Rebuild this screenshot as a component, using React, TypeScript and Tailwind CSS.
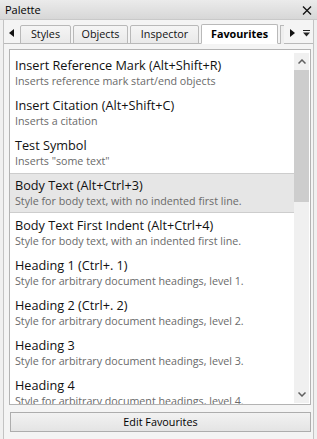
import React from "react";

const items = [
  { t: "Insert Reference Mark (Alt+Shift+R)", d: "Inserts reference mark start/end objects" },
  { t: "Insert Citation (Alt+Shift+C)", d: "Inserts a citation" },
  { t: "Test Symbol", d: 'Inserts "some text"' },
  { t: "Body Text (Alt+Ctrl+3)", d: "Style for body text, with no indented first line.", sel: true },
  { t: "Body Text First Indent (Alt+Ctrl+4)", d: "Style for body text, with an indented first line." },
  { t: "Heading 1 (Ctrl+. 1)", d: "Style for arbitrary document headings, level 1." },
  { t: "Heading 2 (Ctrl+. 2)", d: "Style for arbitrary document headings, level 2." },
  { t: "Heading 3", d: "Style for arbitrary document headings, level 3." },
  { t: "Heading 4", d: "Style for arbitrary document headings, level 4." },
];

const tabs = [
  { n: "Styles", w: "w-[51px]" },
  { n: "Objects", w: "w-[55px]" },
  { n: "Inspector", w: "w-[69px]" },
];

export default function App() {
  return (
    <div className="w-[317px] h-[439px] bg-[#f0f0f0] flex flex-col overflow-hidden font-['Open_Sans',sans-serif] text-black">
      {/* title bar */}
      <div className="h-[20px] flex items-center justify-between bg-[linear-gradient(#ebebeb,#d7d7d7)] border-b border-[#c9c9c9]">
        <span className="ml-[5px] text-[11px] leading-none">Palette</span>
        <svg width="10" height="9" viewBox="0 0 10 9" className="mr-[5px] mt-[2px]">
          <path d="M1 0.5 L9 8.5 M9 0.5 L1 8.5" stroke="#111" strokeWidth="1.3" />
        </svg>
      </div>
      {/* body */}
      <div className="flex-1 mx-[3px] border-x border-[#c3c3c3] flex flex-col bg-[#f4f4f4]">
        {/* tab row */}
        <div className="h-[24px] flex items-end border-b border-[#b9b9b9] relative">
          <div className="w-[16px] h-full flex items-center justify-center">
            <svg width="6" height="8" viewBox="0 0 6 8" className="mt-[3px] ml-[-1px]">
              <path d="M5 0 L0 4 L5 8 Z" fill="#111" />
            </svg>
          </div>
          <div className="flex items-end gap-[2px]">
            {tabs.map((t) => (
              <div
                key={t.n}
                className={`${t.w} h-[19px] -mb-px border border-[#b9b9b9] rounded-t-[2px] bg-[linear-gradient(#f5f5f5,#e9e9e9)] flex items-center justify-center text-[10.8px] leading-none pb-[1px] text-[#111]`}
              >
                {t.n}
              </div>
            ))}
            <div className="w-[77px] h-[20px] -mb-px border border-[#b9b9b9] border-b-white rounded-t-[2px] bg-white flex items-center justify-center text-[10.8px] font-bold leading-none">
              Favourites
            </div>
            <div className="w-[4px] h-[19px] -mb-px border-l border-t border-[#b9b9b9] bg-[#eeeeee]" />
          </div>
          <div className="absolute right-0 top-0 h-full w-[28px] bg-[#f4f4f4] flex items-center gap-[8px] pl-[5px]">
            <svg width="5" height="8" viewBox="0 0 5 8" className="mt-[3px]">
              <path d="M0 0 L5 4 L0 8 Z" fill="#111" />
            </svg>
            <svg width="7" height="7" viewBox="0 0 7 7" className="mt-[4px]">
              <path d="M0 0.5 H7" stroke="#222" strokeWidth="1" />
              <path d="M0 2.5 H7 L3.5 6.5 Z" fill="#222" />
            </svg>
          </div>
        </div>
        {/* content */}
        <div className="flex flex-col pt-[5px] pb-[6px]">
          <div className="ml-[5px] w-[302px] h-[356px] bg-white border border-[#b3b3b3] flex">
            <div className="w-[284px] overflow-hidden pt-[3px]">
              {items.map((it) => (
                <div
                  key={it.t}
                  className={`h-[40px] pl-[5px] ${it.sel ? "bg-[#e6e6e6] border-y border-[#cdcdcd] pt-[3px]" : "pt-[4px]"}`}
                >
                  <div className="text-[12.7px] leading-[17px] whitespace-nowrap text-[#111]">{it.t}</div>
                  <div className="text-[10.7px] leading-[15px] whitespace-nowrap text-[#6a6a6a]">{it.d}</div>
                </div>
              ))}
            </div>
            <div className="w-[15px] mt-[3px] mb-[1px] flex flex-col bg-[#f0f0f0]">
              <div className="h-[17px] flex items-center justify-center">
                <svg width="8" height="5" viewBox="0 0 8 5">
                  <path d="M0.5 4.5 L4 1 L7.5 4.5" fill="none" stroke="#606060" strokeWidth="1.5" />
                </svg>
              </div>
              <div className="h-[132px] bg-[#cdcdcd]" />
              <div className="flex-1" />
              <div className="h-[17px] flex items-center justify-center">
                <svg width="8" height="5" viewBox="0 0 8 5">
                  <path d="M0.5 0.5 L4 4 L7.5 0.5" fill="none" stroke="#606060" strokeWidth="1.5" />
                </svg>
              </div>
            </div>
          </div>
          <div className="mt-[7px] ml-[6px] w-[301px] h-[20px] border border-[#adadad] bg-[linear-gradient(#f2f2f2,#e4e4e4)] flex items-center justify-center text-[10.8px] leading-none">
            Edit Favourites
          </div>
        </div>
      </div>
    </div>
  );
}
